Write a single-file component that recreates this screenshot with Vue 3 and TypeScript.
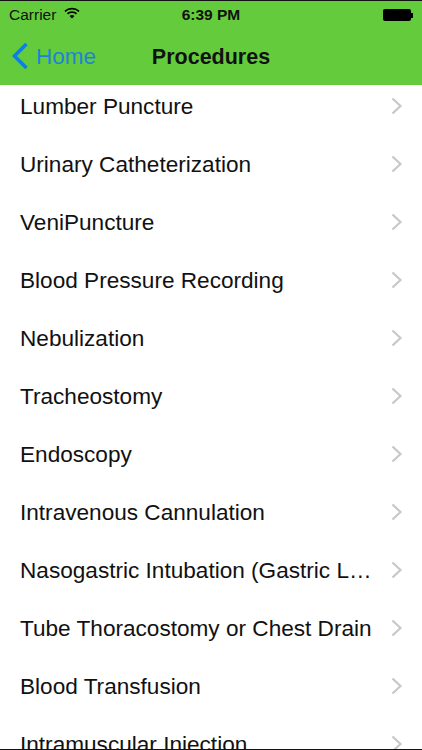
<script setup lang="ts">
const items: string[] = [
  'Lumber Puncture',
  'Urinary Catheterization',
  'VeniPuncture',
  'Blood Pressure Recording',
  'Nebulization',
  'Tracheostomy',
  'Endoscopy',
  'Intravenous Cannulation',
  'Nasogastric Intubation (Gastric Lavage)',
  'Tube Thoracostomy or Chest Drain',
  'Blood Transfusion',
  'Intramuscular Injection',
]
</script>

<template>
  <div class="screen">
    <header class="header">
      <div class="status">
        <div class="status-left">
          <span>Carrier</span>
          <svg class="wifi" width="16" height="12" viewBox="0 0 17 12">
            <path d="M1 4.2C5.2 0.4 11.8 0.4 16 4.2" fill="none" stroke="#000" stroke-width="1.8" />
            <path d="M3.7 6.8C6.4 4.4 10.6 4.4 13.3 6.8" fill="none" stroke="#000" stroke-width="1.8" />
            <path d="M6 9.1C7.5 7.9 9.5 7.9 11 9.1L8.5 11.8Z" fill="#000" />
          </svg>
        </div>
        <span class="time">6:39 PM</span>
        <div class="battery">
          <span class="battery-body"></span>
          <span class="battery-tip"></span>
        </div>
      </div>
      <nav class="nav">
        <div class="back">
          <svg width="18" height="28" viewBox="0 0 18 28">
            <path d="M15.5 2L3.5 14L15.5 26" fill="none" stroke="#0a7fe8" stroke-width="3.6" />
          </svg>
          <span>Home</span>
        </div>
        <div class="title">Procedures</div>
      </nav>
    </header>
    <main class="list">
      <div class="rows">
        <div v-for="item in items" :key="item" class="row">
          <span class="label">{{ item }}</span>
          <svg class="chev" width="12" height="18" viewBox="0 0 12 18">
            <path d="M1.5 1.5L9.5 9L1.5 16.5" fill="none" stroke="#c7c7cc" stroke-width="2.2" />
          </svg>
        </div>
      </div>
    </main>
  </div>
</template>

<style>
html, body { margin: 0; background: #fff; overflow: hidden; }
</style>

<style scoped>
.screen {
  width: 422px;
  height: 750px;
  display: flex;
  flex-direction: column;
  overflow: hidden;
  box-sizing: border-box;
  border-top: 1px solid #111;
  border-bottom: 1px solid #111;
  font-family: "Liberation Sans", Arial, sans-serif;
  color: #111;
  background: #fff;
}
.header {
  flex: none;
  height: 84px;
  background: #64cc3c;
  display: flex;
  flex-direction: column;
}
.status {
  height: 28px;
  display: grid;
  grid-template-columns: 1fr auto 1fr;
  align-items: center;
  padding: 0 9px;
  font-size: 15.5px;
}
.status-left { display: flex; align-items: center; gap: 8px; }
.wifi { margin-top: -4px; }
.time { font-weight: 700; font-size: 15.5px; }
.battery { display: flex; align-items: center; justify-content: flex-end; }
.battery-body { width: 28px; height: 12px; border-radius: 2px; background: #000; }
.battery-tip { width: 2px; height: 5px; background: #000; }
.nav {
  position: relative;
  flex: 1;
  display: flex;
  align-items: center;
  justify-content: center;
}
.back {
  position: absolute;
  left: 11px;
  top: 13px;
  display: flex;
  align-items: center;
  gap: 7px;
  color: #1c84d8;
  font-size: 22.5px;
}
.back span { margin-top: 2px; }
.title { font-weight: 700; font-size: 21.5px; }
.list { flex: 1; overflow: hidden; }
.rows { margin-top: -7px; }
.row {
  height: 58px;
  display: flex;
  align-items: center;
  padding: 0 19px 0 20px;
  gap: 12px;
}
.label {
  flex: 1;
  min-width: 0;
  white-space: nowrap;
  overflow: hidden;
  text-overflow: ellipsis;
  font-size: 22.6px;
}
.chev { flex: none; margin-top: -3px; }
</style>
